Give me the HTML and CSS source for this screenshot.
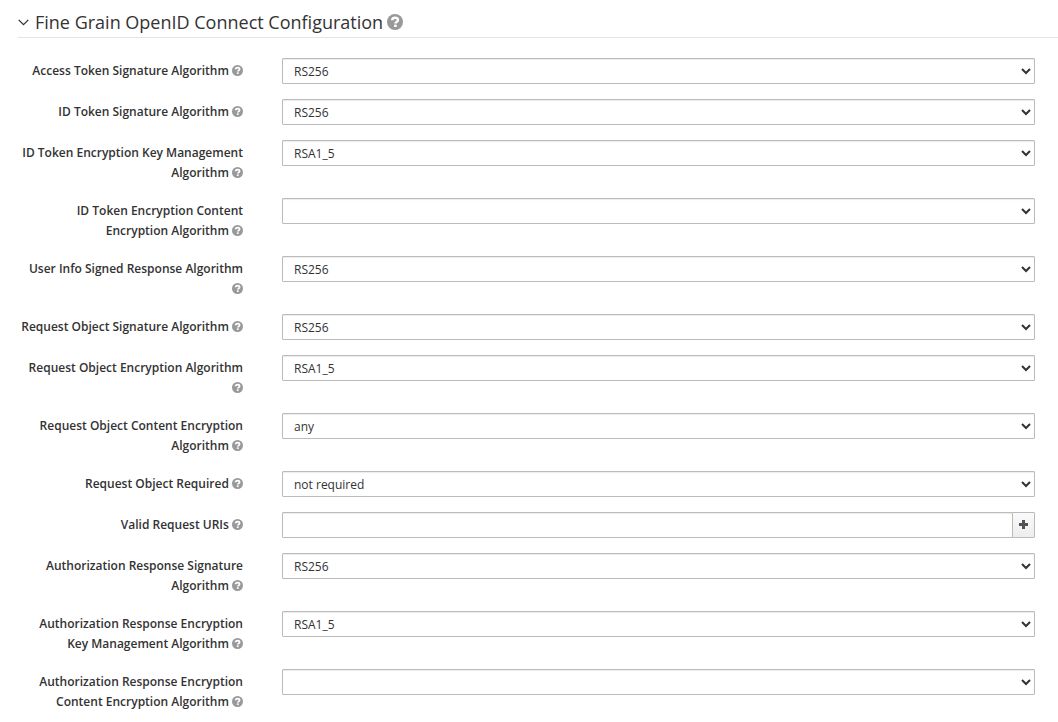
FILE: index.html
```html
<!DOCTYPE html>
<html lang="en">
<head>
<meta charset="utf-8">
<title>Fine Grain OpenID Connect Configuration</title>
<link rel="stylesheet" href="styles.css">
</head>
<body>
<svg class="sprite" aria-hidden="true">
  <symbol id="help" viewBox="0 0 16 16">
    <circle cx="8" cy="8" r="8" fill="#999"/>
    <path d="M5.200 6.200C5.300 4.400 6.400 3.700 8.100 3.700C9.800 3.700 11 4.600 11 6C11 7.900 8.400 7.900 8.400 9.600" fill="none" stroke="#fff" stroke-width="2.500"/>
    <rect x="7.100" y="10.600" width="2.600" height="2.400" fill="#fff"/>
  </symbol>
</svg>
<form class="section">
  <h2 class="legend">
    <button class="toggle" type="button"><svg class="chevron" viewBox="0 0 11 7" aria-hidden="true"><path d="M.7 .9L5.500 5.700L10.300 .9"/></svg>Fine Grain OpenID Connect Configuration</button>
    <svg class="help-large" aria-hidden="true"><use href="#help"/></svg>
  </h2>
  <div class="row">
    <div class="caption"><label for="f1">Access Token Signature Algorithm</label> <svg class="help" aria-hidden="true"><use href="#help"/></svg></div>
    <select class="field" id="f1"><option>RS256</option></select>
  </div>
  <div class="row">
    <div class="caption"><label for="f2">ID Token Signature Algorithm</label> <svg class="help" aria-hidden="true"><use href="#help"/></svg></div>
    <select class="field" id="f2"><option>RS256</option></select>
  </div>
  <div class="row">
    <div class="caption"><label for="f3">ID Token Encryption Key Management Algorithm</label> <svg class="help" aria-hidden="true"><use href="#help"/></svg></div>
    <select class="field" id="f3"><option>RSA1_5</option></select>
  </div>
  <div class="row">
    <div class="caption"><label for="f4">ID Token Encryption Content Encryption Algorithm</label> <svg class="help" aria-hidden="true"><use href="#help"/></svg></div>
    <select class="field" id="f4"><option></option></select>
  </div>
  <div class="row">
    <div class="caption"><label for="f5">User Info Signed Response Algorithm</label> <svg class="help" aria-hidden="true"><use href="#help"/></svg></div>
    <select class="field" id="f5"><option>RS256</option></select>
  </div>
  <div class="row">
    <div class="caption"><label for="f6">Request Object Signature Algorithm</label> <svg class="help" aria-hidden="true"><use href="#help"/></svg></div>
    <select class="field" id="f6"><option>RS256</option></select>
  </div>
  <div class="row">
    <div class="caption"><label for="f7">Request Object Encryption Algorithm</label> <svg class="help" aria-hidden="true"><use href="#help"/></svg></div>
    <select class="field" id="f7"><option>RSA1_5</option></select>
  </div>
  <div class="row">
    <div class="caption"><label for="f8">Request Object Content Encryption Algorithm</label> <svg class="help" aria-hidden="true"><use href="#help"/></svg></div>
    <select class="field" id="f8"><option>any</option></select>
  </div>
  <div class="row">
    <div class="caption"><label for="f9">Request Object Required</label> <svg class="help" aria-hidden="true"><use href="#help"/></svg></div>
    <select class="field" id="f9"><option>not required</option></select>
  </div>
  <div class="row">
    <div class="caption"><label for="f10">Valid Request URIs</label> <svg class="help" aria-hidden="true"><use href="#help"/></svg></div>
    <div class="group">
      <input class="field" id="f10" type="text">
      <button class="add" type="button" aria-label="Add"><svg class="plus" viewBox="0 0 9 9" aria-hidden="true"><path d="M4.500 0V9M0 4.500H9"/></svg></button>
    </div>
  </div>
  <div class="row">
    <div class="caption"><label for="f11">Authorization Response Signature Algorithm</label> <svg class="help" aria-hidden="true"><use href="#help"/></svg></div>
    <select class="field" id="f11"><option>RS256</option></select>
  </div>
  <div class="row">
    <div class="caption"><label for="f12">Authorization Response Encryption Key Management Algorithm</label> <svg class="help" aria-hidden="true"><use href="#help"/></svg></div>
    <select class="field" id="f12"><option>RSA1_5</option></select>
  </div>
  <div class="row">
    <div class="caption"><label for="f13">Authorization Response Encryption Content Encryption Algorithm</label> <svg class="help" aria-hidden="true"><use href="#help"/></svg></div>
    <select class="field" id="f13"><option></option></select>
  </div>
</form>
</body>
</html>
```

FILE: styles.css
```css
* { box-sizing: border-box; }
body {
  margin: 0;
  background: #fff;
  color: #333;
  font: 12px/20px "Open Sans", sans-serif;
}
.sprite { display: none; }
.section {
  display: flex;
  flex-direction: column;
  gap: 15px;
  padding: 7px 0 0 18px;
}
.legend {
  display: flex;
  align-items: center;
  gap: 4px;
  height: 31px;
  margin: 0 0 5px;
  border-bottom: 1px solid #e5e5e5;
  font-size: 18px;
  font-weight: 400;
}
.toggle {
  display: flex;
  align-items: center;
  gap: 6px;
  padding: 0;
  border: 0;
  background: none;
  color: inherit;
  font: inherit;
}
.chevron { width: 11px; height: 7px; }
.chevron path { fill: none; stroke: #333; stroke-width: 1.3; }
.help-large { width: 16px; height: 16px; }
.help { width: 11px; height: 11px; vertical-align: -1px; }
.row {
  display: grid;
  grid-template-columns: 225px 1fr;
  align-items: start;
  column-gap: 39px;
  padding-right: 23px;
}
.caption {
  padding-top: 3px;
  font-weight: 600;
  text-align: right;
}
.field {
  width: 100%;
  height: 26px;
  margin: 0;
  padding: 2px 1px 2px 7px;
  border: 1px solid #bbb;
  border-radius: 1px;
  background: #fff;
  box-shadow: inset 0 1px 1px rgba(0, 0, 0, 0.08);
  color: #333;
  font: 12px/20px "Open Sans", sans-serif;
}
.group { display: flex; }
.add {
  display: flex;
  flex: none;
  align-items: center;
  justify-content: center;
  width: 23px;
  height: 26px;
  margin-left: -1px;
  padding: 0 0 1px;
  border: 1px solid #bbb;
  border-radius: 0 1px 1px 0;
  background: linear-gradient(#fafafa, #ededed);
}
.plus { width: 9px; height: 9px; }
.plus path { stroke: #4d5258; stroke-width: 3; }
```
